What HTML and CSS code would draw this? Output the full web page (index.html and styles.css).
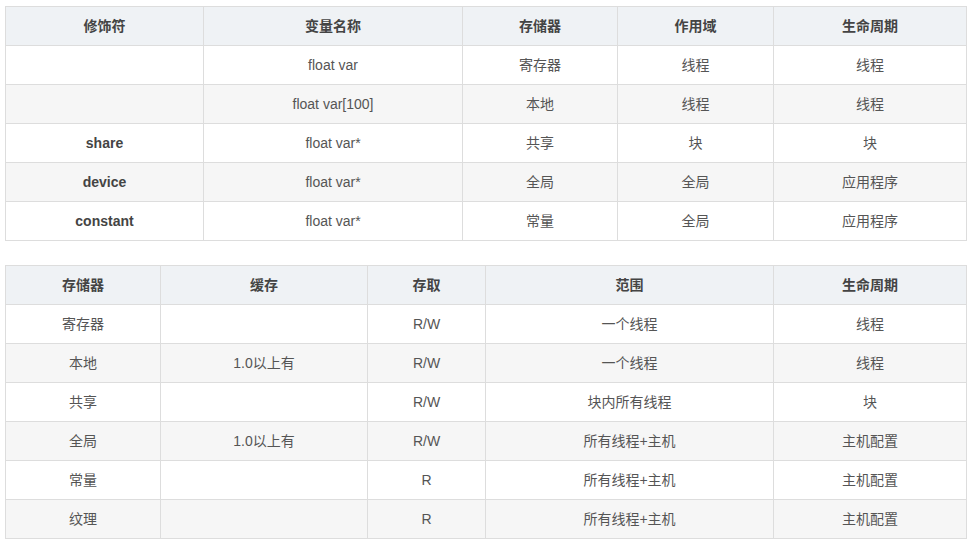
FILE: index.html
```html
<!DOCTYPE html>
<html lang="zh">
<head>
<meta charset="utf-8">
<link rel="stylesheet" href="styles.css">
</head>
<body>
<table class="grid">
  <colgroup>
    <col class="c198"><col class="c259"><col class="c155"><col class="c156"><col class="c193">
  </colgroup>
  <thead>
    <tr><th>修饰符</th><th>变量名称</th><th>存储器</th><th>作用域</th><th>生命周期</th></tr>
  </thead>
  <tbody>
    <tr><td></td><td>float var</td><td>寄存器</td><td>线程</td><td>线程</td></tr>
    <tr><td></td><td>float var[100]</td><td>本地</td><td>线程</td><td>线程</td></tr>
    <tr><td class="b">share</td><td>float var*</td><td>共享</td><td>块</td><td>块</td></tr>
    <tr><td class="b">device</td><td>float var*</td><td>全局</td><td>全局</td><td>应用程序</td></tr>
    <tr><td class="b">constant</td><td>float var*</td><td>常量</td><td>全局</td><td>应用程序</td></tr>
  </tbody>
</table>
<table class="grid second">
  <colgroup>
    <col class="c155"><col class="c207"><col class="c118"><col class="c288"><col class="c193">
  </colgroup>
  <thead>
    <tr><th>存储器</th><th>缓存</th><th>存取</th><th>范围</th><th>生命周期</th></tr>
  </thead>
  <tbody>
    <tr><td>寄存器</td><td></td><td>R/W</td><td>一个线程</td><td>线程</td></tr>
    <tr><td>本地</td><td>1.0以上有</td><td>R/W</td><td>一个线程</td><td>线程</td></tr>
    <tr><td>共享</td><td></td><td>R/W</td><td>块内所有线程</td><td>块</td></tr>
    <tr><td>全局</td><td>1.0以上有</td><td>R/W</td><td>所有线程+主机</td><td>主机配置</td></tr>
    <tr><td>常量</td><td></td><td>R</td><td>所有线程+主机</td><td>主机配置</td></tr>
    <tr><td>纹理</td><td></td><td>R</td><td>所有线程+主机</td><td>主机配置</td></tr>
  </tbody>
</table>
</body>
</html>
```
FILE: styles.css
```css
html, body {
  margin: 0;
  background: #fff;
}
body {
  padding: 6px 5px;
  font-family: "Liberation Sans", Arial, "Noto Sans CJK SC", sans-serif;
  font-size: 14px;
  color: #555;
}
.grid {
  width: 961px;
  table-layout: fixed;
  border-collapse: collapse;
  border-spacing: 0;
}
.second {
  margin-top: 24px;
}
.grid th,
.grid td {
  border: 1px solid #ddd;
  height: 39px;
  padding: 0 8px;
  box-sizing: border-box;
  text-align: center;
  vertical-align: middle;
  line-height: 20px;
  white-space: nowrap;
}
.grid th {
  background: #eff2f5;
  font-weight: bold;
  color: #444;
}
.grid tbody tr:nth-child(even) td {
  background: #f6f6f6;
}
.grid td.b {
  font-weight: bold;
  color: #444;
}
.c198 { width: 198px; }
.c259 { width: 259px; }
.c155 { width: 155px; }
.c156 { width: 156px; }
.c193 { width: 193px; }
.c207 { width: 207px; }
.c118 { width: 118px; }
.c288 { width: 288px; }
```
